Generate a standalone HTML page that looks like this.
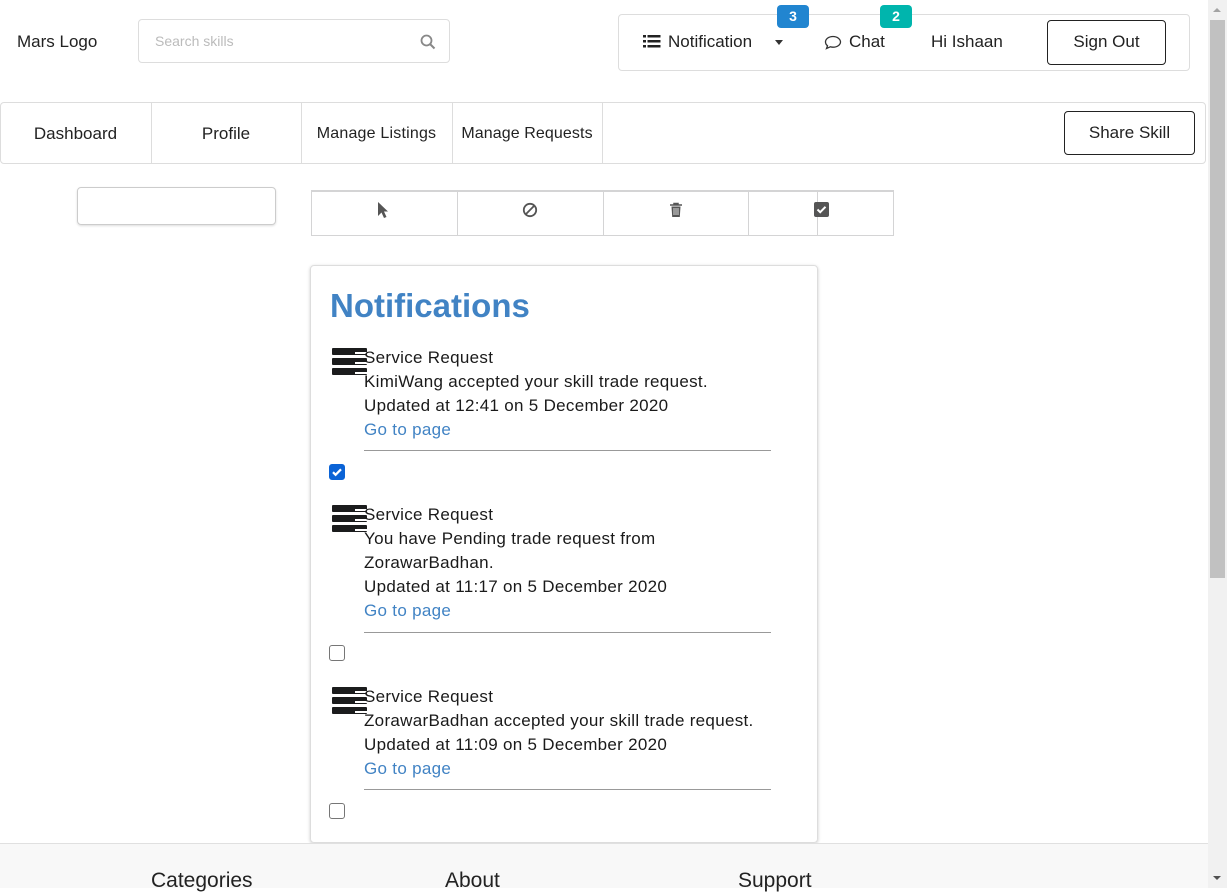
<!DOCTYPE html>
<html><head><meta charset="utf-8">
<style>
*{box-sizing:border-box;margin:0;padding:0}
html,body{width:1227px;height:888px;overflow:hidden;background:#fff;font-family:"Liberation Sans",sans-serif;color:#222}
.a{position:absolute}
.t{font-size:17px;white-space:nowrap;line-height:20px}
.badge{position:absolute;color:#fff;font-weight:bold;font-size:14px;text-align:center;line-height:23px;border-radius:4px;width:32px;height:23px}
.cell{position:absolute;top:190px;height:46px;border:1px solid #d4d4d5;border-top-width:2px}
.ico{position:absolute;left:332px;width:35px;height:30px}
.ico i{position:absolute;left:0;width:35px;height:7px;background:#1b1c1d;border-radius:1px}
.ico b{position:absolute;right:0;width:12px;height:2px;background:#fff}
.it{position:absolute;left:364px;font-size:17px;letter-spacing:.3px;line-height:24px;color:#1a1a1a;white-space:nowrap}
.it a{color:#4183c4;text-decoration:none}
.hr{position:absolute;left:364px;width:407px;height:1px;background:#999}
.cb{position:absolute;left:329px;width:16px;height:16px;border:1px solid #767676;border-radius:3px;background:#fff}
</style></head><body>
<div class="a t" style="left:17px;top:32px">Mars Logo</div>
<div class="a" style="left:138px;top:19px;width:312px;height:44px;border:1px solid #ddd;border-radius:4px"></div>
<div class="a" style="left:155px;top:33px;font-size:14px;color:#bbb">Search skills</div>
<svg class="a" style="left:420px;top:34px" width="16" height="16" viewBox="0 0 16 16"><circle cx="6.5" cy="6.5" r="5" fill="none" stroke="#888" stroke-width="1.8"/><path d="M10 10l4.5 4.5" stroke="#888" stroke-width="2"/></svg>

<div class="a" style="left:618px;top:14px;width:572px;height:57px;border:1px solid #ddd;border-radius:4px"></div>
<svg class="a" style="left:643px;top:34px" width="18" height="15" viewBox="0 0 18 15"><g fill="#222"><rect x="0" y="1" width="3" height="2.5"/><rect x="0" y="6" width="3" height="2.5"/><rect x="0" y="11" width="3" height="2.5"/><rect x="4.5" y="1" width="13" height="2.5"/><rect x="4.5" y="6" width="13" height="2.5"/><rect x="4.5" y="11" width="13" height="2.5"/></g></svg>
<div class="a t" style="left:668px;top:32px">Notification</div>
<div class="a" style="left:775px;top:40px;border-left:4px solid transparent;border-right:4px solid transparent;border-top:5px solid #333"></div>
<svg class="a" style="left:824px;top:35px" width="18" height="15" viewBox="0 0 18 15"><path d="M9 1.5C4.6 1.5 1.5 4 1.5 7c0 1.5.8 2.8 2 3.8L2.5 13.5l3.8-1.7c.9.3 1.7.4 2.7.4 4.4 0 7.5-2.5 7.5-5.2S13.4 1.5 9 1.5z" fill="none" stroke="#333" stroke-width="1.3"/></svg>
<div class="a t" style="left:849px;top:32px">Chat</div>
<div class="a t" style="left:931px;top:32px">Hi Ishaan</div>
<div class="badge" style="left:777px;top:5px;background:#2185d0">3</div>
<div class="badge" style="left:880px;top:5px;background:#00b5ad">2</div>
<div class="a" style="left:1047px;top:20px;width:119px;height:45px;border:1px solid #222;border-radius:4px"></div>
<div class="a t" style="left:1047px;top:32px;width:119px;text-align:center">Sign Out</div>

<div class="a" style="left:0;top:102px;width:1206px;height:62px;border:1px solid #ddd;border-radius:4px"></div>
<div class="a" style="left:151px;top:103px;width:1px;height:60px;background:#ddd"></div>
<div class="a" style="left:301px;top:103px;width:1px;height:60px;background:#ddd"></div>
<div class="a" style="left:452px;top:103px;width:1px;height:60px;background:#ddd"></div>
<div class="a" style="left:602px;top:103px;width:1px;height:60px;background:#ddd"></div>
<div class="a t" style="left:0;top:124px;width:151px;text-align:center">Dashboard</div>
<div class="a t" style="left:151px;top:124px;width:150px;text-align:center">Profile</div>
<div class="a t" style="left:301px;top:124px;width:151px;text-align:center;font-size:16px;letter-spacing:.2px">Manage Listings</div>
<div class="a t" style="left:452px;top:124px;width:150px;text-align:center;font-size:16px;letter-spacing:.1px">Manage Requests</div>
<div class="a" style="left:1064px;top:111px;width:131px;height:44px;border:1px solid #222;border-radius:4px"></div>
<div class="a t" style="left:1064px;top:123px;width:131px;text-align:center">Share Skill</div>

<div class="a" style="left:77px;top:187px;width:199px;height:38px;border:1px solid #ccc;border-radius:4px;box-shadow:0 1px 2px #ddd"></div>

<div class="cell" style="left:817px;width:77px;border-left:0"></div>
<div class="cell" style="left:311px;width:147px"></div>
<div class="cell" style="left:457px;width:147px"></div>
<div class="cell" style="left:603px;width:146px"></div>
<div class="cell" style="left:748px;width:70px"></div>
<svg class="a" style="left:377px;top:201px" width="12" height="18" viewBox="0 0 12 18"><path d="M1 1v14l3.5-3.5L7 17l2.5-1-2.5-5.5H11z" fill="#555"/></svg>
<svg class="a" style="left:522px;top:202px" width="16" height="16" viewBox="0 0 16 16"><circle cx="8" cy="8" r="6.2" fill="none" stroke="#555" stroke-width="1.8"/><path d="M3.8 12.2L12.2 3.8" stroke="#555" stroke-width="1.8"/></svg>
<svg class="a" style="left:669px;top:202px" width="14" height="16" viewBox="0 0 14 16"><path d="M1 3h12M5 3V1.5h4V3" stroke="#555" stroke-width="1.5" fill="none"/><path d="M2.5 4.5h9l-.7 10.5H3.2z" fill="#555"/><path d="M5 6v7M7 6v7M9 6v7" stroke="#fff" stroke-width=".8"/></svg>
<svg class="a" style="left:814px;top:202px" width="15" height="15" viewBox="0 0 15 15"><rect x="0" y="0" width="15" height="15" rx="2" fill="#555"/><path d="M3.5 7.5l2.7 2.7L11.5 4.8" stroke="#fff" stroke-width="2" fill="none"/></svg>

<div class="a" style="left:310px;top:265px;width:508px;height:578px;border:1px solid #ddd;border-radius:4px;box-shadow:0 1px 3px #ccc"></div>
<div class="a" style="left:330px;top:286px;font-size:33px;font-weight:bold;color:#4183c4;line-height:40px">Notifications</div>

<div class="ico" style="top:348px"><i style="top:0"></i><i style="top:10px"></i><i style="top:20px"></i><b style="top:4px"></b><b style="top:14px"></b><b style="top:24px"></b></div>
<div class="it" style="top:346px">Service Request<br>KimiWang accepted your skill trade request.<br>Updated at 12:41 on 5 December 2020<br><a>Go to page</a></div>
<div class="hr" style="top:450px"></div>
<div class="cb" style="top:464px;background:#0b63d6;border-color:#0b63d6"><svg width="14" height="14" viewBox="0 0 14 14" style="position:absolute;left:0;top:0"><path d="M3 7.2l2.6 2.6L11 4.3" stroke="#fff" stroke-width="2.2" fill="none"/></svg></div>

<div class="ico" style="top:505px"><i style="top:0"></i><i style="top:10px"></i><i style="top:20px"></i><b style="top:4px"></b><b style="top:14px"></b><b style="top:24px"></b></div>
<div class="it" style="top:503px">Service Request<br>You have Pending trade request from<br>ZorawarBadhan.<br>Updated at 11:17 on 5 December 2020<br><a>Go to page</a></div>
<div class="hr" style="top:632px"></div>
<div class="cb" style="top:645px"></div>

<div class="ico" style="top:687px"><i style="top:0"></i><i style="top:10px"></i><i style="top:20px"></i><b style="top:4px"></b><b style="top:14px"></b><b style="top:24px"></b></div>
<div class="it" style="top:685px">Service Request<br>ZorawarBadhan accepted your skill trade request.<br>Updated at 11:09 on 5 December 2020<br><a>Go to page</a></div>
<div class="hr" style="top:789px"></div>
<div class="cb" style="top:803px"></div>

<div class="a" style="left:0;top:843px;width:1208px;height:45px;background:#f8f8f8;border-top:1px solid #e0e0e0"></div>
<div class="a" style="left:151px;top:868px;font-size:21px;line-height:26px">Categories</div>
<div class="a" style="left:445px;top:868px;font-size:21px;line-height:26px">About</div>
<div class="a" style="left:738px;top:868px;font-size:21px;line-height:26px">Support</div>

<div class="a" style="left:1208px;top:0;width:19px;height:888px;background:#f1f1f1"></div>
<div class="a" style="left:1210px;top:20px;width:15px;height:558px;background:#c1c1c1"></div>
<div class="a" style="left:1213px;top:8px;border-left:4px solid transparent;border-right:4px solid transparent;border-bottom:4px solid #a3a3a3"></div>
<div class="a" style="left:1213px;top:876px;border-left:4px solid transparent;border-right:4px solid transparent;border-top:4px solid #505050"></div>
</body></html>
